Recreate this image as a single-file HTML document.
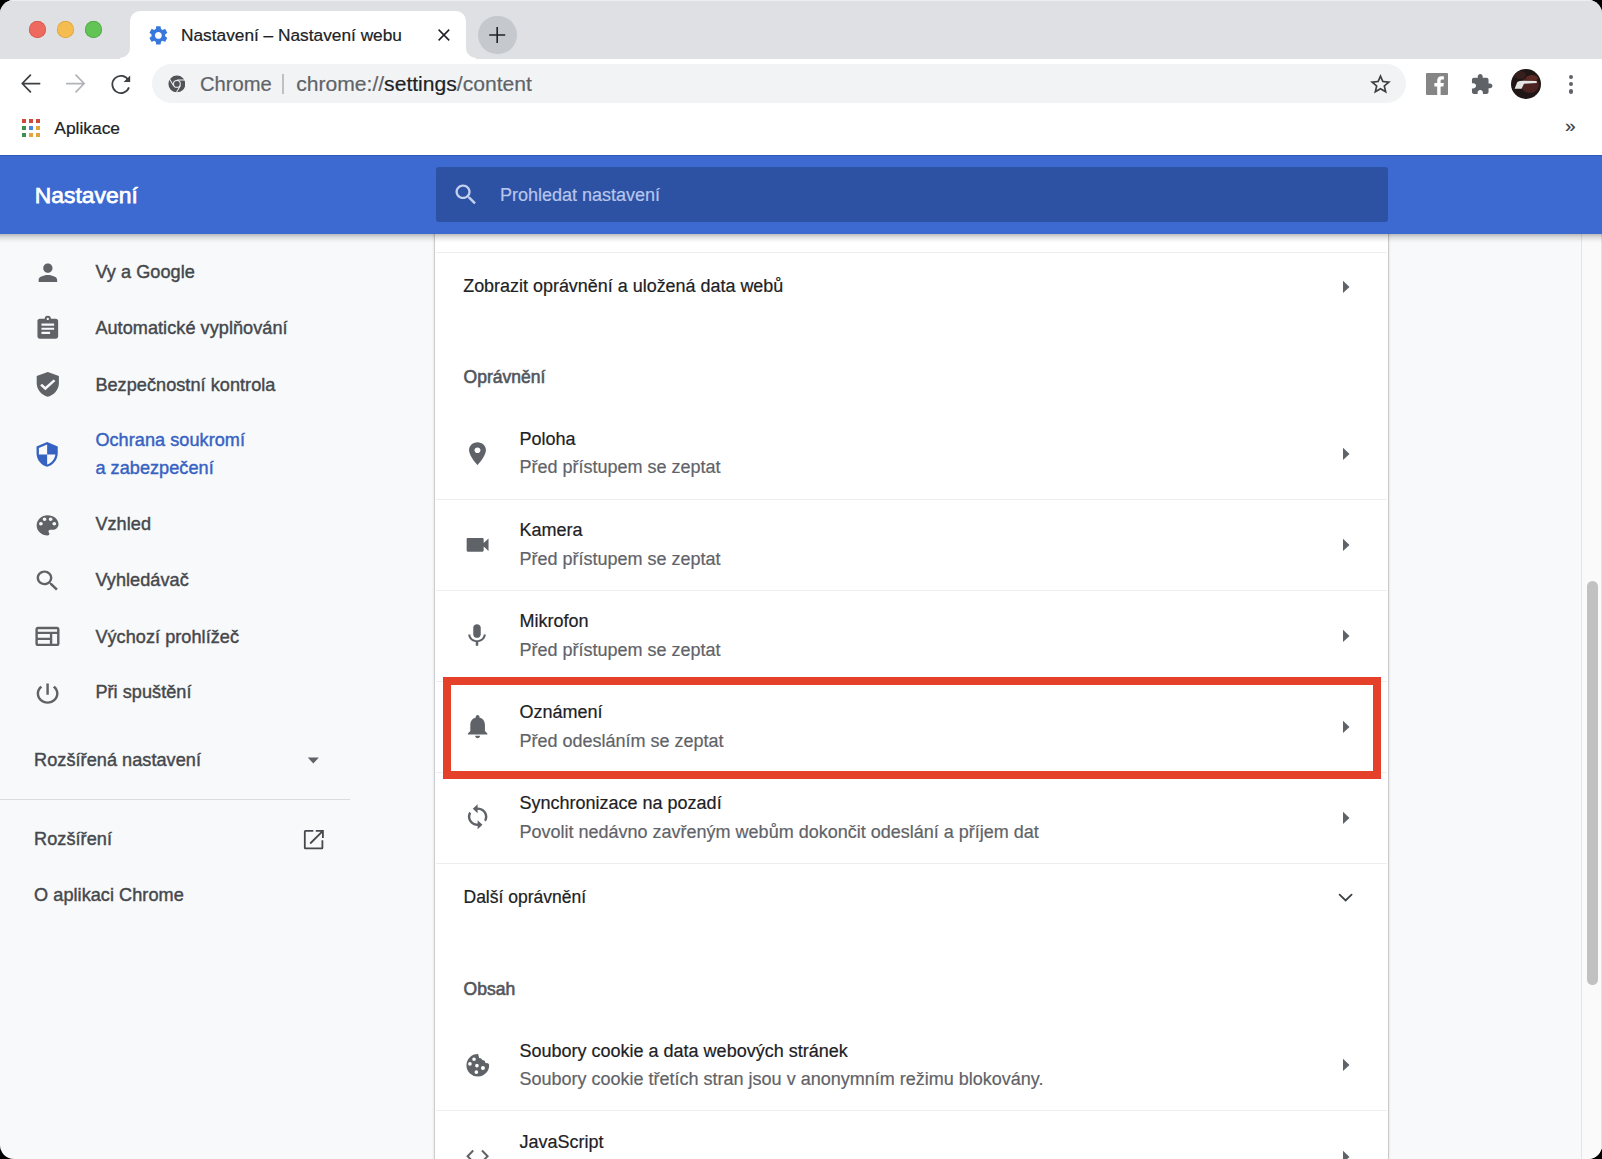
<!DOCTYPE html>
<html><head><meta charset="utf-8">
<style>
html,body{margin:0;padding:0;width:1602px;height:1159px;overflow:hidden;background:#000;}
body{font-family:"Liberation Sans",sans-serif;position:relative;}
#win{position:absolute;left:0;top:0;width:1602px;height:1159px;border-radius:14px;overflow:hidden;background:#f8f9fa;}
.a{position:absolute;}
.t{position:absolute;white-space:nowrap;line-height:normal;-webkit-text-stroke-width:0.2px;}
</style></head><body>
<div id="win">
<div class="a" style="left:0;top:0;width:1602px;height:59px;background:#dfe0e4;"></div>
<div class="a" style="left:0;top:0;width:1602px;height:1px;background:#eceef1;"></div>
<div class="a" style="left:29.299999999999997px;top:21.3px;width:17px;height:17px;border-radius:50%;background:#ee6a5e;box-shadow:inset 0 0 0 0.7px #d4574b"></div>
<div class="a" style="left:57.3px;top:21.3px;width:17px;height:17px;border-radius:50%;background:#f5bd4f;box-shadow:inset 0 0 0 0.7px #d9a13c"></div>
<div class="a" style="left:85.3px;top:21.3px;width:17px;height:17px;border-radius:50%;background:#61c454;box-shadow:inset 0 0 0 0.7px #4aa73c"></div>
<div class="a" style="left:130px;top:11px;width:336px;height:48px;background:#fff;border-radius:10px 10px 0 0;"></div>
<div class="a" style="left:120px;top:48px;width:10px;height:11px;background:#fff;"></div>
<div class="a" style="left:110px;top:38px;width:20px;height:20px;background:#dfe0e4;border-radius:0 0 10px 0;"></div>
<div class="a" style="left:466px;top:48px;width:10px;height:11px;background:#fff;"></div>
<div class="a" style="left:466px;top:38px;width:20px;height:20px;background:#dfe0e4;border-radius:0 0 0 10px;"></div>
<svg class="a" style="left:146.63px;top:23.60px;width:22.74px;height:22.80px" viewBox="0 0 24 24" preserveAspectRatio="none"><path fill="#3878dc" fill-rule="nonzero" d="M19.14 12.94c.04-.3.06-.61.06-.94 0-.32-.02-.64-.07-.94l2.03-1.58c.18-.14.23-.41.12-.61l-1.92-3.32c-.12-.22-.37-.29-.59-.22l-2.39.96c-.5-.38-1.03-.7-1.62-.94l-.36-2.54c-.04-.24-.24-.41-.48-.41h-3.84c-.24 0-.43.17-.47.41l-.36 2.54c-.59.24-1.13.57-1.62.94l-2.39-.96c-.22-.08-.47 0-.59.22L2.74 8.87c-.12.21-.08.47.12.61l2.03 1.58c-.05.3-.09.63-.09.94s.02.64.07.94l-2.03 1.58c-.18.14-.23.41-.12.61l1.92 3.32c.12.22.37.29.59.22l2.39-.96c.5.38 1.03.7 1.62.94l.36 2.54c.05.24.24.41.48.41h3.84c.24 0 .44-.17.47-.41l.36-2.54c.59-.24 1.13-.56 1.62-.94l2.39.96c.22.08.47 0 .59-.22l1.92-3.32c.12-.22.07-.47-.12-.61l-2.01-1.58zM12 15.6c-1.98 0-3.6-1.62-3.6-3.6s1.62-3.6 3.6-3.6 3.6 1.62 3.6 3.6-1.62 3.6-3.6 3.6z"/></svg>
<div class="t" style="left:181.00px;top:25.00px;font-size:17.3px;color:#202124;">Nastavení – Nastavení webu</div>
<svg class="a" style="left:430px;top:21px;width:28px;height:28px" viewBox="430 21 28 28"><path d="M438.6 29.6L449.2 40.4M449.2 29.6L438.6 40.4" stroke="#202124" stroke-width="1.5" fill="none"/></svg>
<div class="a" style="left:478px;top:15.5px;width:38.6px;height:38.6px;border-radius:50%;background:#c5c8cc;"></div>
<svg class="a" style="left:477px;top:15px;width:40px;height:40px" viewBox="477 15 40 40"><path d="M497.2 27V43M489.2 35H505.2" stroke="#202124" stroke-width="1.6" fill="none"/></svg>
<div class="a" style="left:0;top:58.6px;width:1602px;height:96.4px;background:#fff;"></div>
<svg class="a" style="left:0;top:58px;width:150px;height:48px" viewBox="0 58 150 48">
<path d="M39.6 83.5H22.6M30.4 75.2L22.2 83.5L30.4 91.8" stroke="#3c4043" stroke-width="1.75" fill="none" stroke-linecap="round" stroke-linejoin="round"/>
<path d="M66.8 83.5H83.8M76 75.2L84.2 83.5L76 91.8" stroke="#b1b3b7" stroke-width="1.75" fill="none" stroke-linecap="round" stroke-linejoin="round"/>
<path d="M128.4 80.2A8.6 8.6 0 1 0 129 87.4" stroke="#3c4043" stroke-width="1.75" fill="none"/>
<path d="M130.2 75.4V82H123.6Z" fill="#3c4043"/>
</svg>
<div class="a" style="left:152px;top:64px;width:1254px;height:39px;border-radius:20px;background:#f1f3f4;"></div>
<svg class="a" style="left:167.5px;top:75px;width:17.8px;height:17.8px" viewBox="0 0 20 20">
<circle cx="10" cy="10" r="9.5" fill="#505357"/><circle cx="10" cy="10" r="4.4" fill="#f1f3f4"/><circle cx="10" cy="10" r="3.2" fill="#505357"/>
<g stroke="#f1f3f4" stroke-width="1.15" fill="none"><path id="cl" d="M10 5.65H19.6"/><path d="M10 5.65H19.6" transform="rotate(120 10 10)"/><path d="M10 5.65H19.6" transform="rotate(240 10 10)"/></g></svg>
<div class="t" style="left:200.00px;top:73.00px;font-size:20.2px;color:#5f6368;">Chrome</div>
<div class="a" style="left:282px;top:74px;width:1.5px;height:20px;background:#bdc1c6;"></div>
<div class="t" style="left:296.20px;top:72.00px;font-size:21.1px;color:#5f6368;">chrome://<span style="color:#202124">settings</span>/content</div>
<svg class="a" style="left:1368.12px;top:71.86px;width:24.96px;height:24.51px" viewBox="0 0 24 24" preserveAspectRatio="none"><path fill="#3c4043" fill-rule="nonzero" d="M22 9.24l-7.19-.62L12 2 9.19 8.63 2 9.24l5.46 4.73L5.82 21 12 17.27 18.18 21l-1.63-7.03L22 9.24zM12 15.4l-3.76 2.27 1-4.28-3.32-2.88 4.38-.38L12 6.1l1.71 4.04 4.38.38-3.32 2.88 1 4.28L12 15.4z"/></svg>
<svg class="a" style="left:1426px;top:73px;width:22px;height:22px" viewBox="0 0 22 22">
<rect width="22" height="22" rx="1" fill="#858585"/>
<path d="M11.2 22V13.4H8.4V9.9H11.2V7.6C11.2 4.8 12.9 3.3 15.4 3.3C16.6 3.3 17.6 3.4 17.9 3.4V6.4H16.1C14.8 6.4 14.6 7 14.6 7.9V9.9H17.8L17.4 13.4H14.6V22Z" fill="#fff"/>
</svg>
<svg class="a" style="left:1469.55px;top:72.55px;width:23.43px;height:22.86px" viewBox="0 0 24 24" preserveAspectRatio="none"><path fill="#5f6368" fill-rule="nonzero" d="M20.5 11H19V7c0-1.1-.9-2-2-2h-4V3.5C13 2.12 11.88 1 10.5 1S8 2.12 8 3.5V5H4c-1.1 0-1.99.9-1.99 2v3.8H3.5c1.49 0 2.7 1.21 2.7 2.7s-1.21 2.7-2.7 2.7H2V20c0 1.1.9 2 2 2h3.8v-1.5c0-1.49 1.21-2.7 2.7-2.7 1.49 0 2.7 1.21 2.7 2.7V22H17c1.1 0 2-.9 2-2v-4h1.5c1.38 0 2.5-1.120 2.5-2.5S21.88 11 20.5 11z"/></svg>
<svg class="a" style="left:1511.3px;top:69px;width:30px;height:30px" viewBox="0 0 30 30">
<defs><clipPath id="av"><circle cx="15" cy="15" r="15"/></clipPath></defs>
<g clip-path="url(#av)"><rect width="30" height="30" fill="#1f1615"/>
<ellipse cx="19" cy="16" rx="9" ry="8" fill="#4a2220"/><ellipse cx="21" cy="9" rx="6" ry="3" fill="#5e2a26"/><ellipse cx="9" cy="6" rx="6" ry="4" fill="#35201e"/>
<path d="M3.6 19.8L6.3 13.1Q8 11.8 12.6 11.8L25.3 11.9Q26.2 12.6 25.7 13.9L13 14.8L10.6 19.8Z" fill="#e4e4e4"/></g></svg>
<div class="a" style="left:1568.8px;top:74.8px;width:4.4px;height:4.4px;border-radius:50%;background:#5f6368;"></div>
<div class="a" style="left:1568.8px;top:81.8px;width:4.4px;height:4.4px;border-radius:50%;background:#5f6368;"></div>
<div class="a" style="left:1568.8px;top:89.3px;width:4.4px;height:4.4px;border-radius:50%;background:#5f6368;"></div>
<div class="a" style="left:22px;top:119px;width:4px;height:4px;background:#cf4a3c;"></div>
<div class="a" style="left:29px;top:119px;width:4px;height:4px;background:#cf4a3c;"></div>
<div class="a" style="left:36px;top:119px;width:4px;height:4px;background:#cf4a3c;"></div>
<div class="a" style="left:22px;top:126px;width:4px;height:4px;background:#3d9150;"></div>
<div class="a" style="left:29px;top:126px;width:4px;height:4px;background:#4a86e0;"></div>
<div class="a" style="left:36px;top:126px;width:4px;height:4px;background:#e2a43c;"></div>
<div class="a" style="left:22px;top:133px;width:4px;height:4px;background:#3d9150;"></div>
<div class="a" style="left:29px;top:133px;width:4px;height:4px;background:#e2a43c;"></div>
<div class="a" style="left:36px;top:133px;width:4px;height:4px;background:#e2a43c;"></div>
<div class="t" style="left:54.30px;top:118.00px;font-size:17.4px;color:#202124;">Aplikace</div>
<div class="t" style="left:1565px;top:115px;font-size:19px;color:#3c4043;line-height:normal;">»</div>
<div class="a" style="left:0;top:155px;width:1602px;height:78.5px;background:#3d6ad1;z-index:5;"></div>
<div class="a" style="left:0;top:233.5px;width:1602px;height:9px;background:linear-gradient(rgba(0,0,0,.26),rgba(0,0,0,.12) 35%,rgba(0,0,0,.03) 75%,rgba(0,0,0,0));z-index:5;"></div>
<div class="a" style="left:0;top:155px;width:1602px;height:1px;background:#3058b8;z-index:5;"></div>
<div class="a" style="left:435.5px;top:166.5px;width:952px;height:55.5px;background:#2d52a3;border-radius:3px;z-index:6;"></div>
<div style="position:absolute;left:0;top:0;z-index:7">
<div class="t" style="left:34.80px;top:182.00px;font-size:22.8px;color:#fff;-webkit-text-stroke:0.75px #fff;letter-spacing:0.05px;">Nastavení</div>
<svg class="a" style="left:452.10px;top:181.30px;width:27.99px;height:27.17px" viewBox="0 0 24 24" preserveAspectRatio="none"><path fill="#c4d1f0" fill-rule="nonzero" d="M15.5 14h-.79l-.28-.27C15.41 12.59 16 11.11 16 9.5 16 5.91 13.09 3 9.5 3S3 5.910 3 9.5 5.91 16 9.5 16c1.61 0 3.09-.59 4.23-1.57l.27.28v.79l5 4.99L20.49 19l-4.99-5zm-6 0C7.01 14 5 11.99 5 9.5S7.01 5 9.5 5 14 7.01 14 9.5 11.99 14 9.5 14z"/></svg>
<div class="t" style="left:500.00px;top:185.00px;font-size:18px;color:#b7c6ec;">Prohledat nastavení</div>
</div>
<div class="a" style="left:435px;top:233px;width:953px;height:940px;background:#fff;box-shadow:0 0 0 1px rgba(60,64,67,.12), -1px 0 2px rgba(60,64,67,.18), 1px 0 2px rgba(60,64,67,.18);"></div>
<div class="a" style="left:1581px;top:233px;width:21px;height:926px;background:#fafafa;border-left:1px solid #e4e4e4;box-sizing:border-box;"></div>
<div class="a" style="left:1600.5px;top:233px;width:1.5px;height:926px;background:#e2e2e2;"></div>
<div class="a" style="left:1587px;top:581px;width:11px;height:404px;background:#c1c1c1;border-radius:5.5px;"></div>
<div class="t" style="left:95.40px;top:262.00px;font-size:18.1px;color:#45484c;-webkit-text-stroke:0.42px #45484c;letter-spacing:0.05px;">Vy a Google</div>
<svg class="a" style="left:33.77px;top:258.90px;width:27.75px;height:27.60px" viewBox="0 0 24 24" preserveAspectRatio="none"><path fill="#5f6368" fill-rule="nonzero" d="M12 12c2.21 0 4-1.79 4-4s-1.79-4-4-4-4 1.79-4 4 1.79 4 4 4zm0 2c-2.67 0-8 1.34-8 4v2h16v-2c0-2.66-5.33-4-8-4z"/></svg>
<div class="t" style="left:95.40px;top:318.00px;font-size:18.1px;color:#45484c;-webkit-text-stroke:0.42px #45484c;letter-spacing:0.05px;">Automatické vyplňování</div>
<svg class="a" style="left:33.75px;top:315.12px;width:27.60px;height:25.83px" viewBox="0 0 24 24" preserveAspectRatio="none"><path fill="#5f6368" fill-rule="nonzero" d="M5 3.5h4.3a2.7 2.7 0 0 1 5.4 0H19c1.1 0 2 .9 2 2V20c0 1.1-.9 2-2 2H5c-1.1 0-2-.9-2-2V5.5c0-1.1.9-2 2-2zM12 2.6a1 1 0 1 0 .001 0zM6.5 8v2h11V8zm0 3.8v2h11v-2zm0 3.8v2h7.5v-2z"/></svg>
<div class="t" style="left:95.40px;top:375.00px;font-size:18.1px;color:#45484c;-webkit-text-stroke:0.42px #45484c;letter-spacing:0.05px;">Bezpečnostní kontrola</div>
<svg class="a" style="left:33.00px;top:371.08px;width:29.60px;height:26.84px" viewBox="0 0 24 24" preserveAspectRatio="none"><path fill="#5f6368" fill-rule="nonzero" d="M12 1L3 4.5v6.5c0 5.55 3.84 10.74 9 12 5.16-1.26 9-6.45 9-12V4.5L12 1zm-2 16.2l-4.2-4.2 1.5-1.5 2.7 2.7 6.7-6.7 1.5 1.5z"/></svg>
<div class="t" style="left:95.40px;top:430.00px;font-size:18.1px;color:#3662c2;-webkit-text-stroke:0.42px #3662c2;letter-spacing:0.05px;">Ochrana soukromí</div>
<div class="t" style="left:95.40px;top:458.00px;font-size:18.1px;color:#3662c2;-webkit-text-stroke:0.42px #3662c2;letter-spacing:0.05px;">a zabezpečení</div>
<svg class="a" style="left:33.27px;top:441.28px;width:28.27px;height:26.95px" viewBox="0 0 24 24" preserveAspectRatio="none"><path fill="#3662c2" fill-rule="nonzero" d="M12 1L3 5v6c0 5.55 3.84 10.74 9 12 5.16-1.26 9-6.45 9-12V5l-9-4zm0 10.99h7c-.53 4.12-3.28 7.79-7 8.94V12H5V6.3l7-3.11v8.8z"/></svg>
<div class="t" style="left:95.40px;top:514.00px;font-size:18.1px;color:#45484c;-webkit-text-stroke:0.42px #45484c;letter-spacing:0.05px;">Vzhled</div>
<svg class="a" style="left:32.65px;top:511.85px;width:29.20px;height:26.80px" viewBox="0 0 24 24" preserveAspectRatio="none"><path fill="#5f6368" fill-rule="nonzero" d="M12 3c-4.97 0-9 4.03-9 9s4.03 9 9 9c.83 0 1.5-.67 1.5-1.5 0-.39-.15-.74-.39-1.01-.23-.26-.38-.61-.38-.99 0-.83.67-1.5 1.5-1.5H16c2.76 0 5-2.24 5-5 0-4.42-4.03-8-9-8zm-5.5 9c-.83 0-1.5-.67-1.5-1.5S5.67 9 6.5 9 8 9.67 8 10.5 7.33 12 6.5 12zm3-4C8.670 8 8 7.33 8 6.5S8.67 5 9.5 5s1.5.67 1.5 1.5S10.33 8 9.5 8zm5 0c-.83 0-1.5-.67-1.5-1.5S13.67 5 14.5 5s1.5.67 1.5 1.5S15.33 8 14.5 8zm3 4c-.83 0-1.5-.67-1.5-1.5S16.67 9 17.5 9s1.5.67 1.5 1.5-.67 1.5-1.5 1.5z"/></svg>
<div class="t" style="left:95.40px;top:570.00px;font-size:18.1px;color:#45484c;-webkit-text-stroke:0.42px #45484c;letter-spacing:0.05px;">Vyhledávač</div>
<svg class="a" style="left:32.66px;top:567.47px;width:29.09px;height:27.44px" viewBox="0 0 24 24" preserveAspectRatio="none"><path fill="#5f6368" fill-rule="nonzero" d="M15.5 14h-.79l-.28-.27C15.41 12.59 16 11.11 16 9.5 16 5.91 13.09 3 9.5 3S3 5.910 3 9.5 5.91 16 9.5 16c1.61 0 3.09-.59 4.23-1.57l.27.28v.79l5 4.99L20.49 19l-4.99-5zm-6 0C7.01 14 5 11.99 5 9.5S7.01 5 9.5 5 14 7.01 14 9.5 11.99 14 9.5 14z"/></svg>
<div class="t" style="left:95.40px;top:627.00px;font-size:18.1px;color:#45484c;-webkit-text-stroke:0.42px #45484c;letter-spacing:0.05px;">Výchozí prohlížeč</div>
<svg class="a" style="left:32.79px;top:622.38px;width:28.92px;height:28.95px" viewBox="0 0 24 24" preserveAspectRatio="none"><path fill="#5f6368" fill-rule="nonzero" d="M20 4H4c-1.1 0-1.99.9-1.99 2L2 18c0 1.1.9 2 2 2h16c1.1 0 2-.9 2-2V6c0-1.1-.9-2-2-2zm0 14h-4V10h4zm-6 0H4v-3h10zm0-5H4v-3h10zM4 6h16v2H4z"/></svg>
<div class="t" style="left:95.40px;top:682.00px;font-size:18.1px;color:#45484c;-webkit-text-stroke:0.42px #45484c;letter-spacing:0.05px;">Při spuštění</div>
<svg class="a" style="left:32.65px;top:679.50px;width:29.20px;height:27.20px" viewBox="0 0 24 24" preserveAspectRatio="none"><path fill="#5f6368" fill-rule="nonzero" d="M13 3h-2v10h2V3zm4.83 2.17l-1.42 1.42C17.99 7.86 19 9.81 19 12c0 3.87-3.13 7-7 7s-7-3.13-7-7c0-2.19 1.01-4.14 2.58-5.42L6.17 5.17C4.23 6.82 3 9.26 3 12c0 4.97 4.03 9 9 9s9-4.03 9-9c0-2.74-1.23-5.18-3.17-6.83z"/></svg>
<div class="t" style="left:34.10px;top:750.00px;font-size:18.1px;color:#45484c;-webkit-text-stroke:0.42px #45484c;letter-spacing:0.05px;">Rozšířená nastavení</div>
<svg class="a" style="left:300.13px;top:745.40px;width:26.64px;height:29.76px" viewBox="0 0 24 24" preserveAspectRatio="none"><path fill="#5f6368" fill-rule="nonzero" d="M7 10l5 5 5-5z"/></svg>
<div class="a" style="left:0;top:799px;width:350px;height:1px;background:#dadce0;"></div>
<div class="t" style="left:34.10px;top:829.00px;font-size:18.1px;color:#45484c;-webkit-text-stroke:0.42px #45484c;letter-spacing:0.05px;">Rozšíření</div>
<svg class="a" style="left:295px;top:820px;width:40px;height:40px" viewBox="295 820 40 40"><path d="M313.3 830.8H305.4Q304.8 830.8 304.8 831.4V847.8Q304.8 848.4 305.4 848.4H321.8Q322.4 848.4 322.4 847.8V840.3" stroke="#45484c" stroke-width="1.8" fill="none"/><path d="M310.2 843.5L322.4 831.3M315.8 830.8H322.9V837.9" stroke="#45484c" stroke-width="1.8" fill="none"/></svg>
<div class="t" style="left:34.10px;top:885.00px;font-size:18.1px;color:#45484c;-webkit-text-stroke:0.42px #45484c;letter-spacing:0.05px;">O aplikaci Chrome</div>
<div class="a" style="left:436px;top:252px;width:951px;height:1px;background:#eeeeee;"></div>
<div class="t" style="left:463.20px;top:276.00px;font-size:17.95px;color:#202124;">Zobrazit oprávnění a uložená data webů</div>
<svg class="a" style="left:1329.50px;top:271.62px;width:31.20px;height:29.76px" viewBox="0 0 24 24" preserveAspectRatio="none"><path fill="#5f6368" fill-rule="nonzero" d="M10 17l5-5-5-5v10z"/></svg>
<div class="t" style="left:463.60px;top:367.00px;font-size:17.5px;color:#5f6368;-webkit-text-stroke:0.6px #53565a;color:#53565a;">Oprávnění</div>
<div class="t" style="left:519.50px;top:429.00px;font-size:18px;color:#202124;">Poloha</div>
<div class="t" style="left:519.50px;top:457.00px;font-size:18px;color:#5f6368;">Před přístupem se zeptat</div>
<svg class="a" style="left:462.96px;top:439.52px;width:28.97px;height:27.36px" viewBox="0 0 24 24" preserveAspectRatio="none"><path fill="#5f6368" fill-rule="nonzero" d="M12 2C8.13 2 5 5.13 5 9c0 5.25 7 13 7 13s7-7.75 7-13c0-3.87-3.13-7-7-7zm0 9.5c-1.38 0-2.5-1.12-2.5-2.5s1.12-2.5 2.5-2.5 2.5 1.12 2.5 2.5-1.12 2.5-2.5 2.5z"/></svg>
<svg class="a" style="left:1329.50px;top:438.52px;width:31.20px;height:29.76px" viewBox="0 0 24 24" preserveAspectRatio="none"><path fill="#5f6368" fill-rule="nonzero" d="M10 17l5-5-5-5v10z"/></svg>
<div class="t" style="left:519.50px;top:520.00px;font-size:18px;color:#202124;">Kamera</div>
<div class="t" style="left:519.50px;top:549.00px;font-size:18px;color:#5f6368;">Před přístupem se zeptat</div>
<svg class="a" style="left:462.65px;top:530.90px;width:29.20px;height:27.60px" viewBox="0 0 24 24" preserveAspectRatio="none"><path fill="#5f6368" fill-rule="nonzero" d="M17 10.5V7c0-.55-.45-1-1-1H4c-.55 0-1 .45-1 1v10c0 .55.45 1 1 1h12c.55 0 1-.45 1-1v-3.5l4 4v-11l-4 4z"/></svg>
<svg class="a" style="left:1329.50px;top:529.67px;width:31.20px;height:29.76px" viewBox="0 0 24 24" preserveAspectRatio="none"><path fill="#5f6368" fill-rule="nonzero" d="M10 17l5-5-5-5v10z"/></svg>
<div class="t" style="left:519.50px;top:611.00px;font-size:18px;color:#202124;">Mikrofon</div>
<div class="t" style="left:519.50px;top:640.00px;font-size:18px;color:#5f6368;">Před přístupem se zeptat</div>
<svg class="a" style="left:462.45px;top:621.74px;width:30.00px;height:27.16px" viewBox="0 0 24 24" preserveAspectRatio="none"><path fill="#5f6368" fill-rule="nonzero" d="M12 14c1.66 0 2.99-1.34 2.99-3L15 5c0-1.66-1.34-3-3-3S9 3.34 9 5v6c0 1.66 1.34 3 3 3zm5.3-3c0 3-2.54 5.1-5.3 5.1S6.7 14 6.7 11H5c0 3.41 2.72 6.23 6 6.72V21h2v-3.28c3.28-.48 6-3.3 6-6.72h-1.7z"/></svg>
<svg class="a" style="left:1329.50px;top:620.62px;width:31.20px;height:29.76px" viewBox="0 0 24 24" preserveAspectRatio="none"><path fill="#5f6368" fill-rule="nonzero" d="M10 17l5-5-5-5v10z"/></svg>
<div class="t" style="left:519.50px;top:702.00px;font-size:18px;color:#202124;">Oznámení</div>
<div class="t" style="left:519.50px;top:731.00px;font-size:18px;color:#5f6368;">Před odesláním se zeptat</div>
<svg class="a" style="left:462.82px;top:711.83px;width:29.25px;height:28.55px" viewBox="0 0 24 24" preserveAspectRatio="none"><path fill="#5f6368" fill-rule="nonzero" d="M12 22c1.1 0 2-.9 2-2h-4c0 1.1.89 2 2 2zm6-6v-5c0-3.07-1.64-5.64-4.5-6.32V4c0-.83-.67-1.5-1.5-1.5s-1.5.67-1.5 1.5v.68C7.63 5.36 6 7.92 6 11v5l-2 2v1h16v-1l-2-2z"/></svg>
<svg class="a" style="left:1329.50px;top:711.87px;width:31.20px;height:29.76px" viewBox="0 0 24 24" preserveAspectRatio="none"><path fill="#5f6368" fill-rule="nonzero" d="M10 17l5-5-5-5v10z"/></svg>
<div class="t" style="left:519.50px;top:793.00px;font-size:18px;color:#202124;">Synchronizace na pozadí</div>
<div class="t" style="left:519.50px;top:822.00px;font-size:18px;color:#5f6368;">Povolit nedávno zavřeným webům dokončit odeslání a příjem dat</div>
<svg class="a" style="left:462.82px;top:803.45px;width:29.25px;height:27.49px" viewBox="0 0 24 24" preserveAspectRatio="none"><path fill="#5f6368" fill-rule="nonzero" d="M12 4V1L8 5l4 4V6c3.31 0 6 2.69 6 6 0 1.01-.25 1.97-.7 2.8l1.46 1.46C19.54 15.03 20 13.57 20 12c0-4.42-3.58-8-8-8zm0 14c-3.310 0-6-2.69-6-6 0-1.01.25-1.97.7-2.8L5.24 7.74C4.46 8.97 4 10.43 4 12c0 4.42 3.58 8 8 8v3l4-4-4-4v3z"/></svg>
<svg class="a" style="left:1329.50px;top:802.72px;width:31.20px;height:29.76px" viewBox="0 0 24 24" preserveAspectRatio="none"><path fill="#5f6368" fill-rule="nonzero" d="M10 17l5-5-5-5v10z"/></svg>
<div class="a" style="left:436px;top:498.5px;width:951px;height:1px;background:#eeeeee;"></div>
<div class="a" style="left:436px;top:589.5px;width:951px;height:1px;background:#eeeeee;"></div>
<div class="a" style="left:436px;top:680.5px;width:951px;height:1px;background:#eeeeee;"></div>
<div class="a" style="left:436px;top:771.5px;width:951px;height:1px;background:#eeeeee;"></div>
<div class="a" style="left:436px;top:862.5px;width:951px;height:1px;background:#eeeeee;"></div>
<div class="t" style="left:463.50px;top:887.00px;font-size:17.5px;color:#202124;">Další oprávnění</div>
<svg class="a" style="left:1330px;top:880px;width:30px;height:30px" viewBox="1330 880 30 30"><path d="M1339.6 894.6L1345.6 900.4L1351.6 894.6" stroke="#3c4043" stroke-width="1.8" fill="none" stroke-linecap="round" stroke-linejoin="miter"/></svg>
<div class="t" style="left:463.60px;top:979.00px;font-size:17.5px;color:#5f6368;-webkit-text-stroke:0.6px #53565a;color:#53565a;">Obsah</div>
<div class="t" style="left:519.50px;top:1041.00px;font-size:18px;color:#202124;">Soubory cookie a data webových stránek</div>
<div class="t" style="left:519.50px;top:1069.00px;font-size:18px;color:#5f6368;">Soubory cookie třetích stran jsou v anonymním režimu blokovány.</div>
<svg class="a" style="left:455px;top:1040px;width:45px;height:45px" viewBox="0 0 1159 1159"><path fill="#5f6368" fill-rule="evenodd" d="M595 358A292 292 0 1 0 878 628L850 598L785 592L765 532L705 518L668 472L622 462Z
M490 495m-47 0a47 47 0 1 0 94 0a47 47 0 1 0 -94 0ZM385 615m-47 0a47 47 0 1 0 94 0a47 47 0 1 0 -94 0ZM565 660m-47 0a47 47 0 1 0 94 0a47 47 0 1 0 -94 0ZM720 722m-52 0a52 52 0 1 0 104 0a52 52 0 1 0 -104 0ZM550 828m-47 0a47 47 0 1 0 94 0a47 47 0 1 0 -94 0Z"/></svg>
<svg class="a" style="left:1329.50px;top:1050.12px;width:31.20px;height:29.76px" viewBox="0 0 24 24" preserveAspectRatio="none"><path fill="#5f6368" fill-rule="nonzero" d="M10 17l5-5-5-5v10z"/></svg>
<div class="a" style="left:436px;top:1110px;width:951px;height:1px;background:#eeeeee;"></div>
<div class="t" style="left:519.50px;top:1132.00px;font-size:18px;color:#202124;">JavaScript</div>
<svg class="a" style="left:460px;top:1140px;width:35px;height:19px" viewBox="460 1140 35 19"><path d="M473.2 1150.5L467.6 1156.2L473.2 1161.9M482 1150.5L487.6 1156.2L482 1161.9" stroke="#5f6368" stroke-width="2" fill="none"/></svg>
<svg class="a" style="left:1329.50px;top:1141.72px;width:31.20px;height:29.76px" viewBox="0 0 24 24" preserveAspectRatio="none"><path fill="#5f6368" fill-rule="nonzero" d="M10 17l5-5-5-5v10z"/></svg>
<div class="a" style="left:443px;top:677px;width:938px;height:102px;border:8px solid #e5402a;box-sizing:border-box;z-index:3;"></div>
</div>
</body></html>
